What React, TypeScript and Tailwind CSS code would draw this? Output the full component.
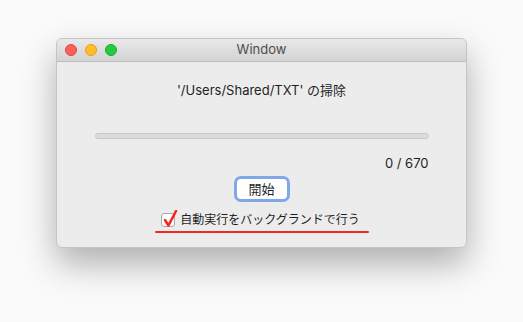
import React from 'react';

const font = { fontFamily: '"Inter", "Noto Sans CJK JP", sans-serif' };

export default function App() {
    return (
        <div className="w-[523px] h-[322px] bg-[#fafafa] overflow-hidden" style={font}>
            <div className="ml-[56px] pt-[38px]">
                <div className="w-[411px] h-[210px] rounded-[6px] bg-[#ececec] border border-[#c4c4c4] shadow-[0_16px_34px_rgba(0,0,0,0.3)] overflow-hidden flex flex-col">
                    {/* title bar */}
                    <div className="relative h-[23px] shrink-0 bg-gradient-to-b from-[#e9e9e9] to-[#d3d3d3] border-b border-[#bdbdbd] flex items-center">
                        <div className="flex items-center gap-[8px] pl-[8px]">
                            <span className="w-[12px] h-[12px] rounded-full bg-[#fe5f57] border border-[#e2463f]"></span>
                            <span className="w-[12px] h-[12px] rounded-full bg-[#febc2e] border border-[#e1a116]"></span>
                            <span className="w-[12px] h-[12px] rounded-full bg-[#28c840] border border-[#14ae2d]"></span>
                        </div>
                        <div className="absolute inset-0 flex items-center justify-center text-[13px] text-[#4d4d4d]">Window</div>
                    </div>
                    {/* body */}
                    <div className="flex flex-col items-center">
                        <div className="mt-[19px] h-[18px] text-[13px] leading-[18px] text-[#1f1f1f]">'/Users/Shared/TXT' の掃除</div>
                        <div className="mt-[34px] w-[334px] h-[6px] rounded-full bg-[#dcdcdc] border border-[#c9c9c9]"></div>
                        <div className="mt-[16px] w-[334px] text-right text-[13px] leading-[16px] text-[#1f1f1f]">0 / 670</div>
                        <div className="mt-[5px] w-[56px] h-[26px] rounded-[7px] bg-[#7fa7ea] p-[3px]">
                            <div className="w-full h-full rounded-[4px] bg-white flex items-center justify-center text-[13px] leading-none text-[#1f1f1f]">開始</div>
                        </div>
                        <div className="mt-[10px] flex items-center gap-[5px] -ml-[2px]">
                            <div className="relative w-[14px] h-[14px] rounded-[3px] bg-white border border-[#a8a8a8]">
                                <svg className="absolute -top-[4px] left-[1px]" width="16" height="18" viewBox="0 0 16 18">
                                    <path d="M2 10 L5.5 15.5 L13 1" fill="none" stroke="#f2291c" strokeWidth="2.6" strokeLinecap="round" strokeLinejoin="round" />
                                </svg>
                            </div>
                            <span className="text-[12px] leading-[16px] text-[#1f1f1f]">自動実行をバックグランドで行う</span>
                        </div>
                        <div className="mt-[3px] w-[214px] h-[2px] bg-[#f2291c] rounded-full"></div>
                    </div>
                </div>
            </div>
        </div>
    );
}
